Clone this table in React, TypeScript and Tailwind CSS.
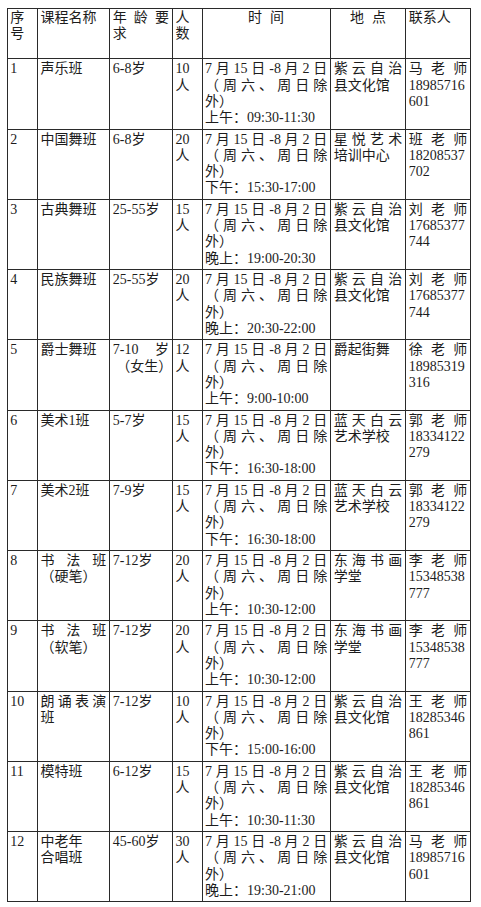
import React from "react";

type Line = { t: string; j?: boolean };
type Row = {
  no: string;
  name: Line[];
  age: Line[];
  count: string;
  time: string;
  place: Line[];
  contact: [string, string, string];
};

const L = (t: string, j = false): Line => ({ t, j });

const rows: Row[] = [
  { no: "1", name: [L("声乐班")], age: [L("6-8岁")], count: "10", time: "上午：09:30-11:30", place: [L("紫云自治", true), L("县文化馆")], contact: ["马老师", "18985716", "601"] },
  { no: "2", name: [L("中国舞班")], age: [L("6-8岁")], count: "20", time: "下午：15:30-17:00", place: [L("星悦艺术", true), L("培训中心")], contact: ["班老师", "18208537", "702"] },
  { no: "3", name: [L("古典舞班")], age: [L("25-55岁")], count: "15", time: "晚上：19:00-20:30", place: [L("紫云自治", true), L("县文化馆")], contact: ["刘老师", "17685377", "744"] },
  { no: "4", name: [L("民族舞班")], age: [L("25-55岁")], count: "20", time: "晚上：20:30-22:00", place: [L("紫云自治", true), L("县文化馆")], contact: ["刘老师", "17685377", "744"] },
  { no: "5", name: [L("爵士舞班")], age: [L("7-10 岁", true), L("\u00a0（女生）")], count: "12", time: "上午：9:00-10:00", place: [L("爵起街舞")], contact: ["徐老师", "18985319", "316"] },
  { no: "6", name: [L("美术1班")], age: [L("5-7岁")], count: "15", time: "下午：16:30-18:00", place: [L("蓝天白云", true), L("艺术学校")], contact: ["郭老师", "18334122", "279"] },
  { no: "7", name: [L("美术2班")], age: [L("7-9岁")], count: "15", time: "下午：16:30-18:00", place: [L("蓝天白云", true), L("艺术学校")], contact: ["郭老师", "18334122", "279"] },
  { no: "8", name: [L("书法班", true), L("（硬笔）")], age: [L("7-12岁")], count: "20", time: "上午：10:30-12:00", place: [L("东海书画", true), L("学堂")], contact: ["李老师", "15348538", "777"] },
  { no: "9", name: [L("书法班", true), L("（软笔）")], age: [L("7-12岁")], count: "20", time: "上午：10:30-12:00", place: [L("东海书画", true), L("学堂")], contact: ["李老师", "15348538", "777"] },
  { no: "10", name: [L("朗诵表演", true), L("班")], age: [L("7-12岁")], count: "10", time: "下午：15:00-16:00", place: [L("紫云自治", true), L("县文化馆")], contact: ["王老师", "18285346", "861"] },
  { no: "11", name: [L("模特班")], age: [L("6-12岁")], count: "15", time: "上午：10:30-11:30", place: [L("紫云自治", true), L("县文化馆")], contact: ["王老师", "18285346", "861"] },
  { no: "12", name: [L("中老年"), L("合唱班")], age: [L("45-60岁")], count: "30", time: "晚上：19:30-21:00", place: [L("紫云自治", true), L("县文化馆")], contact: ["马老师", "18985716", "601"] },
];

function Lines({ lines }: { lines: Line[] }) {
  return (
    <>
      {lines.map((l, i) => (
        <div
          key={i}
          className={
            l.j
              ? "whitespace-nowrap text-justify [text-align-last:justify]"
              : "whitespace-nowrap"
          }
        >
          {l.t}
        </div>
      ))}
    </>
  );
}

function Cell({ children, top = "pt-[2px]" }: { children: React.ReactNode; top?: string }) {
  return (
    <div
      className={`border-r-[1.5px] border-b-[1.5px] border-[#2a2a2a] pl-[2.5px] pr-[3px] overflow-hidden ${top}`}
    >
      {children}
    </div>
  );
}

export default function App() {
  return (
    <div className="min-h-[907px] bg-white pt-[8.25px] pl-[6.75px] text-[#1c1c1c] font-['Liberation_Serif','Noto_Sans_CJK_SC',serif] text-[14px] leading-[16.3px]">
      <div className="grid w-max grid-cols-[30.2px_72.3px_62.7px_29.6px_128.7px_75px_65px] grid-rows-[50px_repeat(12,70.25px)] border-l-[1.5px] border-t-[1.5px] border-[#2a2a2a]">
        <Cell top="pt-[0.5px]">
          <Lines lines={[L("序"), L("号")]} />
        </Cell>
        <Cell top="pt-[0.5px]">
          <Lines lines={[L("课程名称")]} />
        </Cell>
        <Cell top="pt-[0.5px]">
          <Lines lines={[L("年龄要", true), L("求")]} />
        </Cell>
        <Cell top="pt-[0.5px]">
          <Lines lines={[L("人"), L("数")]} />
        </Cell>
        <Cell top="pt-[0.5px]">
          <div className="flex justify-center gap-[8px]">
            <span>时</span>
            <span>间</span>
          </div>
        </Cell>
        <Cell top="pt-[0.5px]">
          <div className="flex justify-center gap-[8px]">
            <span>地</span>
            <span>点</span>
          </div>
        </Cell>
        <Cell top="pt-[0.5px]">
          <Lines lines={[L("联系人")]} />
        </Cell>

        {rows.map((r) => (
          <React.Fragment key={r.no}>
            <Cell>
              <Lines lines={[L(r.no)]} />
            </Cell>
            <Cell>
              <Lines lines={r.name} />
            </Cell>
            <Cell>
              <Lines lines={r.age} />
            </Cell>
            <Cell>
              <Lines lines={[L(r.count), L("人")]} />
            </Cell>
            <Cell>
              <Lines
                lines={[
                  L("7 月 15 日 -8 月 2 日", true),
                  L("（周六、周日除", true),
                  L("外）"),
                  L(r.time),
                ]}
              />
            </Cell>
            <Cell>
              <Lines lines={r.place} />
            </Cell>
            <Cell>
              <Lines lines={[L(r.contact[0], true), L(r.contact[1]), L(r.contact[2])]} />
            </Cell>
          </React.Fragment>
        ))}
      </div>
    </div>
  );
}
